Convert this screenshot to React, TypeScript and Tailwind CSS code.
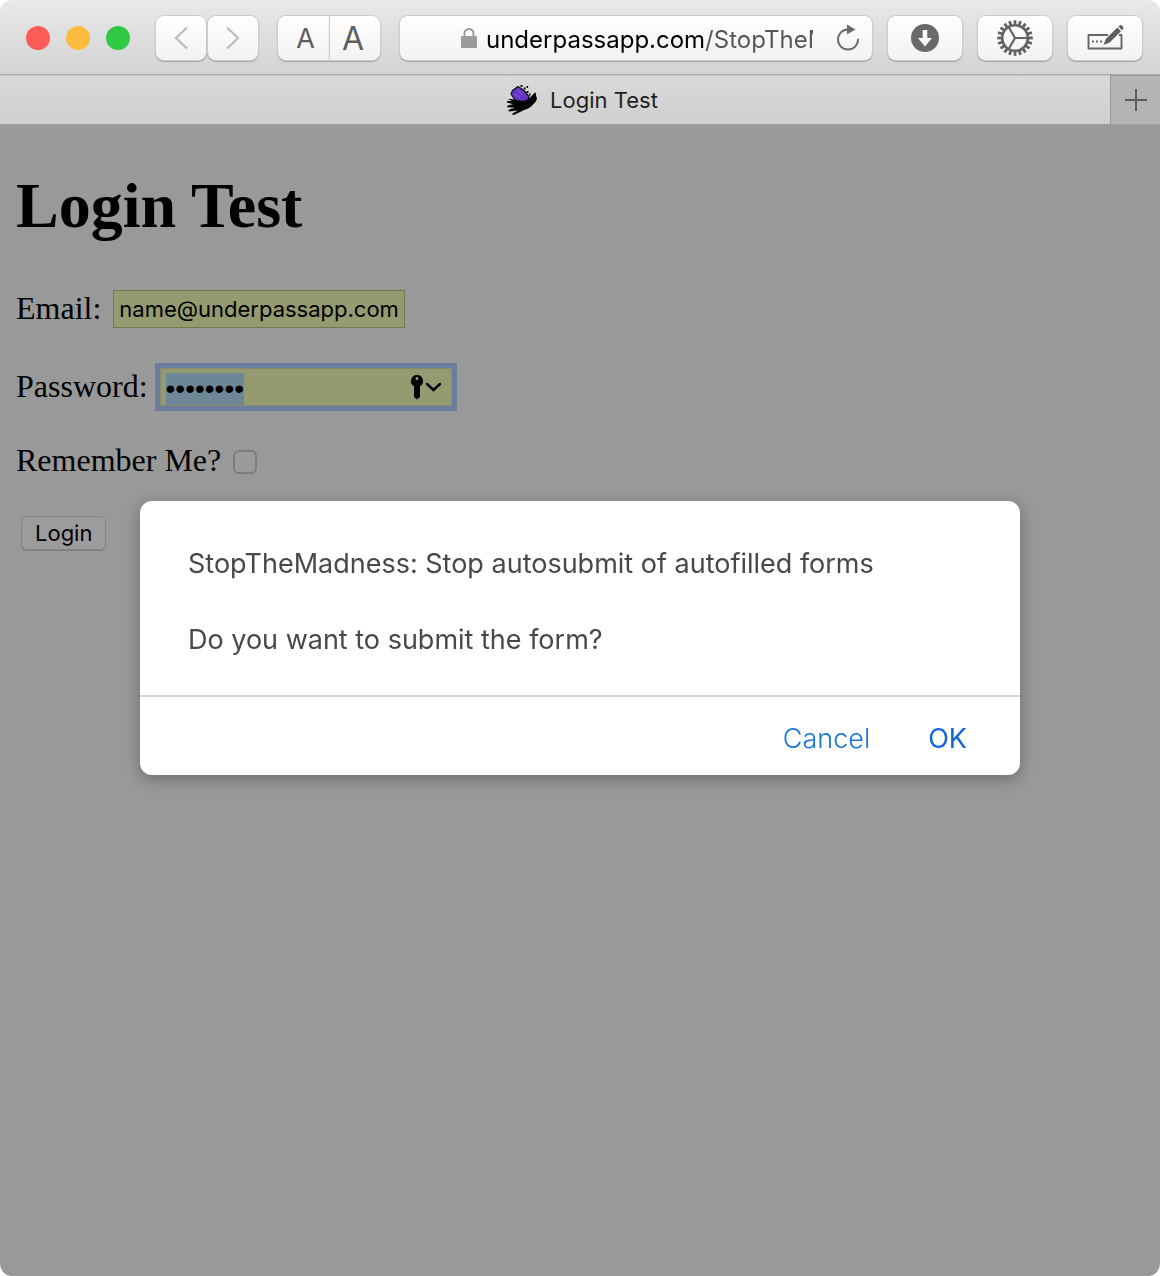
import { useEffect, useRef, useState } from 'react';
import type { ReactNode } from 'react';
import clsx from 'clsx';

const GEAR_TEETH = Array.from({ length: 20 }, (_, i) => i * 18);

function LockIcon() {
  return (
    <svg width="18" height="22" viewBox="0 0 18 22" className="shrink-0" aria-hidden="true">
      <path d="M4.5 11V6.5a4.5 4.5 0 0 1 9 0V11" fill="none" stroke="#9b9b9b" strokeWidth="2" />
      <rect x="1" y="9" width="16" height="12" rx="1" fill="#9b9b9b" />
    </svg>
  );
}

function ReloadIcon() {
  return (
    <svg width="26" height="28" viewBox="0 0 26 28" aria-hidden="true">
      <path d="M14 5.5A10 10 0 1 0 24 15.5" fill="none" stroke="#6b6b6b" strokeWidth="1.9" strokeLinecap="round" />
      <path d="M13 0.5L21.5 5.5L13 10.5Z" fill="#6b6b6b" />
    </svg>
  );
}

function DownloadIcon() {
  return (
    <svg width="28" height="28" viewBox="0 0 28 28" aria-hidden="true">
      <circle cx="14" cy="14" r="14" fill="#6a6a6a" />
      <path d="M11.7 6h4.6v8h4.7L14 22.5 7 14h4.7Z" fill="#fbfbfb" />
    </svg>
  );
}

function GearIcon() {
  return (
    <svg width="38" height="38" viewBox="-19 -19 38 38" fill="none" stroke="#636363" aria-hidden="true">
      <circle r="12.8" strokeWidth="2.6" />
      {GEAR_TEETH.map((deg) => (
        <path key={deg} d="M0 -13.5V-17.8" strokeWidth="2.8" transform={`rotate(${deg})`} />
      ))}
      <path d="M0 0H13M0 0L-6.5 -11.2M0 0L-6.5 11.2" strokeWidth="2.2" />
    </svg>
  );
}

function ComposeIcon() {
  return (
    <svg width="38" height="28" viewBox="0 0 38 28" aria-hidden="true">
      <path d="M22 11H2.5V24.5H35.5V11H33" fill="none" stroke="#666" strokeWidth="1.9" strokeLinejoin="round" />
      <path d="M6 17.5h2M10 17.5h2M14 17.5h2" stroke="#666" strokeWidth="2" />
      <path d="M17.5 21L20 14.8L31.4 3.6L35 7.2L23.6 18.4Z" fill="#5e5e5e" />
      <path d="M32.4 2.6L33.6 1.4Q34.8 0.4 36.2 1.8L36.8 2.4Q38 3.8 37 5L36 6.2Z" fill="#5e5e5e" />
    </svg>
  );
}

// hand holding a purple butterfly
function SiteIcon() {
  return (
    <svg width="32" height="32" viewBox="0 0 32 32" aria-hidden="true">
      <path d="M5 10L6.5 6.5L12 2.5L18 6.5L23 12.5L21 18L10 17.5Z" fill="#6535c0" stroke="#120a24" strokeWidth="1.2" strokeLinejoin="round" />
      <path d="M12 5.5L16 10.5M8.5 10L14 13.5" stroke="#7d4fdc" strokeWidth="1.4" fill="none" />
      <path d="M14.5 1h2v2h-2zM17.5 3.5h2v2h-2zM20.5 2h1.6v2h-1.6zM20.5 7h2v2h-2zM23 9.5h1.6v2H23z" fill="#111" />
      <path d="M2 15Q8 14.5 13 16.5Q20 17.5 24 13.5L29 8.5Q30.500 8.500 30 12L31 14Q31 17 28 19.5Q24 24.5 18 26L9 30.5Q6.5 31.5 6 30Q8 28 12 26.4L3 27.5Q1.5 26.5 4 25.2L9 23.4L2 23.5Q0 22.3 2.5 21.2L7 20.2L1 18.6Q0 17.2 2.5 17L6 17Z" fill="#050505" />
    </svg>
  );
}

function KeyIcon() {
  return (
    <svg width="32" height="26" viewBox="0 0 32 26" aria-hidden="true">
      <path fillRule="evenodd" d="M7 1a6 6 0 0 1 3 11.2V23L7 25.5L4 23V12.2A6 6 0 0 1 7 1ZM7 3a1.5 1.5 0 1 0 0 3a1.5 1.5 0 0 0 0-3Z" fill="#000" />
      <path d="M17 10L23.5 16L30 10" fill="none" stroke="#000" strokeWidth="2.4" strokeLinecap="round" />
    </svg>
  );
}

type ToolButtonProps = { label: string; className?: string; children: ReactNode };

function ToolButton({ label, className, children }: ToolButtonProps) {
  return (
    <button
      aria-label={label}
      className={clsx(
        'flex h-11 shrink-0 items-center justify-center bg-gradient-to-b from-white to-[#f2f2f2] shadow-[0_0_0_1px_#cdcdcd,0_1px_1px_1px_#a4a4a4]',
        className,
      )}
    >
      {children}
    </button>
  );
}

function Toolbar() {
  const [url, setUrl] = useState('underpassapp.com/StopTheMadness/');

  return (
    <header className="flex h-[75px] items-center border-b border-[#adadad] bg-gradient-to-b from-[#e9e9e9] to-[#d3d3d3] pt-[2px] pr-[18px] pl-[26px]">
      <div className="flex shrink-0 gap-4">
        <button aria-label="Close" className="size-6 rounded-full bg-[#fc5b57]" />
        <button aria-label="Minimize" className="size-6 rounded-full bg-[#fdbc40]" />
        <button aria-label="Zoom" className="size-6 rounded-full bg-[#2fc943]" />
      </div>

      <nav className="ml-[26px] flex shrink-0 gap-[2px]">
        <ToolButton label="Back" className="w-[50px] rounded-lg">
          <svg width="14" height="24" viewBox="0 0 14 24" fill="none" stroke="#bdbdbd" strokeWidth="2.2" aria-hidden="true">
            <path d="M13 1.5L2 12L13 22.5" />
          </svg>
        </ToolButton>
        <ToolButton label="Forward" className="w-[50px] rounded-lg">
          <svg width="14" height="24" viewBox="0 0 14 24" fill="none" stroke="#bdbdbd" strokeWidth="2.2" aria-hidden="true">
            <path d="M1 1.5L12 12L1 22.5" />
          </svg>
        </ToolButton>
      </nav>

      <div className="ml-5 flex shrink-0 gap-px text-[#5f5f5f]">
        <ToolButton label="Smaller text" className="w-[51px] rounded-l-lg pt-[2px] pl-1 text-[27px]">A</ToolButton>
        <ToolButton label="Larger text" className="w-[50px] rounded-r-lg pt-[2px] pr-1 text-[32px]">A</ToolButton>
      </div>

      <div className="ml-5 flex h-11 min-w-0 flex-1 items-center justify-end rounded-lg bg-gradient-to-b from-white to-[#f2f2f2] pr-3 shadow-[0_0_0_1px_#cdcdcd,0_1px_1px_1px_#a4a4a4]">
        <LockIcon />
        <input
          aria-label="Address"
          value={url}
          onChange={(e) => setUrl(e.target.value)}
          className="ml-2 h-10 w-[327px] min-w-0 bg-[linear-gradient(90deg,#000_218px,#555_218px)] bg-clip-text pt-[2px] text-2xl text-transparent caret-black outline-none"
        />
        <button aria-label="Reload" className="ml-[21px]">
          <ReloadIcon />
        </button>
      </div>

      <div className="ml-4 flex shrink-0 gap-4">
        <ToolButton label="Downloads" className="w-[74px] rounded-lg"><DownloadIcon /></ToolButton>
        <ToolButton label="Settings" className="w-[74px] rounded-lg"><GearIcon /></ToolButton>
        <ToolButton label="Autofill" className="w-[74px] rounded-lg"><ComposeIcon /></ToolButton>
      </div>
    </header>
  );
}

function TabBar() {
  return (
    <div className="flex h-[50px] border-b border-[#a0a0a0]">
      <button className="flex flex-1 items-center justify-center gap-3 border-t border-[#c4c4c4] bg-gradient-to-b from-[#d9d9d9] to-[#cfcfcf] pl-[54px] text-[22px] text-[#1f1f1f]">
        <SiteIcon />
        Login Test
      </button>
      <button aria-label="New tab" className="flex w-[50px] items-center justify-center border-t border-l border-[#999] bg-[#b4b4b4]">
        <svg width="22" height="22" viewBox="0 0 22 22" stroke="#5c5c5c" strokeWidth="2" aria-hidden="true">
          <path d="M11 0V22M0 11H22" />
        </svg>
      </button>
    </div>
  );
}

function LoginForm() {
  const [email, setEmail] = useState('name@underpassapp.com');
  const [password, setPassword] = useState('password');
  const passwordRef = useRef<HTMLInputElement>(null);

  useEffect(() => {
    passwordRef.current?.focus();
    passwordRef.current?.select();
  }, []);

  return (
    <main className="flex-1 bg-[#999] px-4 pt-11 font-['Liberation_Serif',serif] text-[32px] leading-9 text-black">
      <h1 className="text-[64px] leading-[74px] font-bold">Login Test</h1>

      <form onSubmit={(e) => e.preventDefault()}>
        <div className="mt-[47px] flex items-start gap-3">
          <label htmlFor="email">Email:</label>
          <input
            id="email"
            type="email"
            value={email}
            onChange={(e) => setEmail(e.target.value)}
            className="h-[38px] w-[292px] border border-[#737a4c] bg-[#959b70] px-[5px] font-[Inter,sans-serif] text-[22px] outline-none"
          />
        </div>

        <div className="mt-10 flex items-start gap-3">
          <label htmlFor="password">Password:</label>
          <div className="relative">
            <input
              id="password"
              ref={passwordRef}
              type="password"
              value={password}
              onChange={(e) => setPassword(e.target.value)}
              className="block h-[38px] w-[292px] border border-[#8a8a70] bg-[#959b70] pt-[3px] pr-12 pl-[5px] font-['Liberation_Sans',sans-serif] text-[28px] shadow-[0_0_0_5px_#6b7d9b] outline-none selection:bg-[#6d8797] selection:text-black"
            />
            <button type="button" aria-label="Show saved passwords" className="absolute top-[6px] right-[10px]">
              <KeyIcon />
            </button>
          </div>
        </div>

        <div className="mt-9 flex items-center gap-3">
          <label htmlFor="remember">Remember Me?</label>
          <input
            id="remember"
            type="checkbox"
            className="mt-1 size-6 appearance-none rounded-md border-2 border-[#7c7c7c] bg-[#9b9b9b]"
          />
        </div>

        <button className="mt-[38px] ml-[5px] block h-[34px] rounded-md border border-[#858585] bg-[#9c9c9c] px-[13px] font-[Inter,sans-serif] text-[22px] leading-8 shadow-[0_1px_0_#7c7c7c]">
          Login
        </button>
      </form>
    </main>
  );
}

function ConfirmDialog({ onClose }: { onClose: () => void }) {
  return (
    <div className="fixed inset-0 flex items-center justify-center px-6">
      <div role="dialog" aria-modal="true" className="w-full max-w-[880px] rounded-xl bg-white shadow-[0_4px_16px_rgba(0,0,0,0.3)]">
        <div className="px-12 pt-11 pb-9 text-[27px] leading-[38px] text-[#484848]">
          <p>StopTheMadness: Stop autosubmit of autofilled forms</p>
          <p className="mt-[38px]">Do you want to submit the form?</p>
        </div>
        <div className="flex h-20 items-center justify-end gap-[58px] border-t-2 border-[#d4d4d4] pt-[6px] pr-[53px] text-[27px]">
          <button onClick={onClose} className="font-light text-[#1a73d9]">Cancel</button>
          <button onClick={onClose} className="text-[#1266dd]">OK</button>
        </div>
      </div>
    </div>
  );
}

export default function App() {
  const [open, setOpen] = useState(true);

  return (
    <div className="min-h-screen bg-white font-[Inter,sans-serif]">
      <div className="flex min-h-screen flex-col overflow-hidden rounded-xl">
        <Toolbar />
        <TabBar />
        <LoginForm />
      </div>
      {open && <ConfirmDialog onClose={() => setOpen(false)} />}
    </div>
  );
}
